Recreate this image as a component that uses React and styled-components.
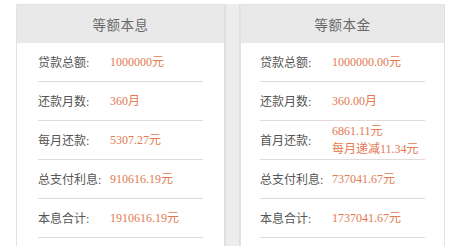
import React from 'react'
import styled, { createGlobalStyle } from 'styled-components'

const plans = [
  {
    title: '等额本息',
    width: 209,
    inset: 21,
    rows: [
      { label: '贷款总额:', value: ['1000000元'] },
      { label: '还款月数:', value: ['360月'] },
      { label: '每月还款:', value: ['5307.27元'] },
      { label: '总支付利息:', value: ['910616.19元'] },
      { label: '本息合计:', value: ['1910616.19元'] },
    ],
  },
  {
    title: '等额本金',
    width: 205,
    inset: 19,
    rows: [
      { label: '贷款总额:', value: ['1000000.00元'] },
      { label: '还款月数:', value: ['360.00月'] },
      { label: '首月还款:', value: ['6861.11元', '每月递减11.34元'] },
      { label: '总支付利息:', value: ['737041.67元'] },
      { label: '本息合计:', value: ['1737041.67元'] },
    ],
  },
]

function App() {
  return (
    <>
      <GlobalStyle />
      <Page>
        {plans.map((plan, i) => (
          <React.Fragment key={plan.title}>
            {i > 0 && <Gutter />}
            <Card $width={plan.width}>
              <Header>{plan.title}</Header>
              {plan.rows.map((row) => (
                <Row key={row.label} $inset={plan.inset}>
                  <Label>{row.label}</Label>
                  <Value>
                    {row.value.map((line) => (
                      <span key={line}>{line}</span>
                    ))}
                  </Value>
                </Row>
              ))}
            </Card>
          </React.Fragment>
        ))}
      </Page>
    </>
  )
}

export default App

const GlobalStyle = createGlobalStyle`
  html, body {
    margin: 0;
    padding: 0;
    background: #fff;
    overflow: hidden;
  }
  body {
    font-family: "Liberation Serif", "Noto Sans CJK SC", serif;
  }
`

const Page = styled.div`
  display: flex;
  align-items: stretch;
  width: 457px;
  height: 246px;
  padding: 4px 0 0 16px;
  box-sizing: border-box;
  overflow: hidden;
`

const Gutter = styled.div`
  width: 15px;
  background: #ededed;
  border-left: 1px solid #e3dcdc;
  border-right: 1px solid #e3dcdc;
  box-sizing: border-box;
`

const Card = styled.div`
  width: ${(p) => p.$width}px;
  flex-shrink: 0;
  background: #fff;
  border-left: 1px solid #eadede;
  border-right: 1px solid #eadede;
  border-top: 1px solid #e6e0e0;
  box-sizing: border-box;
`

const Header = styled.div`
  height: 38px;
  display: flex;
  align-items: center;
  justify-content: center;
  background: #e9e9e9;
  color: #6a6a6a;
  font-size: 13.5px;
  letter-spacing: 0.5px;
`

const Row = styled.div`
  height: 38px;
  margin: 0 ${(p) => p.$inset}px;
  border-bottom: 1px solid #e2dada;
  display: flex;
  align-items: center;
`

const Label = styled.div`
  width: 72px;
  flex-shrink: 0;
  color: #555;
  font-size: 12px;
  white-space: nowrap;
`

const Value = styled.div`
  display: flex;
  flex-direction: column;
  color: #e27a52;
  font-size: 12px;
  line-height: 18px;
  white-space: nowrap;
`
